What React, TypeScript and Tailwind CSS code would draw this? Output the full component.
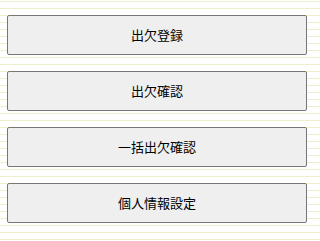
const items = ["出欠登録", "出欠確認", "一括出欠確認", "個人情報設定"];

export default function App() {
  return (
    <div className="min-h-screen w-full bg-white bg-[repeating-linear-gradient(to_bottom,transparent_0px,transparent_1px,#eeeecc_1px,#eeeecc_2px,transparent_2px,transparent_7px)] font-['Noto_Sans_CJK_JP','Noto_Sans',sans-serif]">
      <div className="flex flex-col gap-4 px-[7px] pt-[15px]">
        {items.map((label) => (
          <button
            key={label}
            type="button"
            className="h-10 w-[300px] rounded-[2px] border border-[#767676] bg-[#efefef] text-[13px] text-black"
          >
            {label}
          </button>
        ))}
      </div>
    </div>
  );
}
